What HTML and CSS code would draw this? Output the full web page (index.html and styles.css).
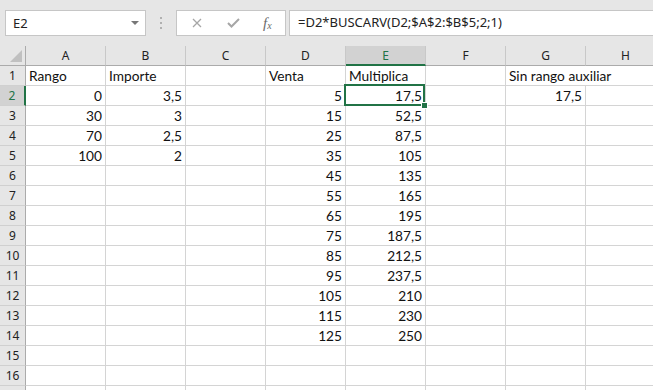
FILE: index.html
```html
<!DOCTYPE html>
<html lang="es">
<head>
  <meta charset="UTF-8" />
  <title>Hoja de cálculo - BUSCARV</title>
  <link rel="stylesheet" href="styles.css">
</head>
<body>
  <div class="toolbar">
    <div class="name-box">
      <span>E2</span>
      <span class="arrow"></span>
    </div>
    <div class="grip"><i></i><i></i><i></i></div>
    <div class="fx-buttons">
      <svg class="btn-x" width="10" height="10" viewBox="0 0 10 10"><path d="M1 1L9 9M9 1L1 9" stroke="#a6a6a6" stroke-width="1.3" fill="none"/></svg>
      <svg class="btn-ok" width="13" height="10" viewBox="0 0 13 10"><path d="M1 5L4.5 8.5L12 1" stroke="#a6a6a6" stroke-width="2" fill="none"/></svg>
      <span class="btn-fx">f<sub>x</sub></span>
    </div>
    <div class="formula">=D2*BUSCARV(D2;$A$2:$B$5;2;1)</div>
  </div>

  <div class="sheet" id="sheet">
    <div class="selection"><span class="handle"></span></div>
  </div>

  <script>
    const cols = ["A", "B", "C", "D", "E", "F", "G", "H"];
    // row -> { col: value }, strings starting with "#" are text cells
    const data = {
      1: { A: "#Rango", B: "#Importe", D: "#Venta", E: "#Multiplica", G: "#Sin rango auxiliar" },
      2: { A: "0", B: "3,5", D: "5", E: "17,5", G: "17,5" },
      3: { A: "30", B: "3", D: "15", E: "52,5" },
      4: { A: "70", B: "2,5", D: "25", E: "87,5" },
      5: { A: "100", B: "2", D: "35", E: "105" },
      6: { D: "45", E: "135" },
      7: { D: "55", E: "165" },
      8: { D: "65", E: "195" },
      9: { D: "75", E: "187,5" },
      10: { D: "85", E: "212,5" },
      11: { D: "95", E: "237,5" },
      12: { D: "105", E: "210" },
      13: { D: "115", E: "230" },
      14: { D: "125", E: "250" }
    };

    const sheet = document.getElementById("sheet");

    function cell(cls, text) {
      const d = document.createElement("div");
      d.className = cls;
      if (text) d.textContent = text;
      sheet.appendChild(d);
      return d;
    }

    // Column headers
    cell("corner");
    cols.forEach(c => cell(c === "E" ? "col-head active" : "col-head", c));

    // Rows (the 17th only peeks in at the bottom edge)
    for (let r = 1; r <= 17; r++) {
      const label = r < 17 ? String(r) : "";
      cell(r === 2 ? "row-head active" : "row-head", label);
      const row = data[r] || {};
      for (let i = 0; i < cols.length; i++) {
        const c = cols[i];
        const v = row[c];
        if (v && v[0] === "#") {
          const el = cell("cell text", v.slice(1));
          if (c === "G") { el.classList.add("span2"); i++; }
        } else {
          cell("cell num", v || "");
        }
      }
    }
  </script>
</body>
</html>
```

FILE: styles.css
```css
html, body {
  margin: 0;
  padding: 0;
  overflow: hidden;
}
body {
  width: 653px;
  height: 390px;
  background: #fff;
  font-family: Lato, "Liberation Sans", sans-serif;
}

.toolbar {
  height: 46px;
  background: #e6e6e6;
  display: flex;
  align-items: flex-start;
  padding-top: 10px;
  box-sizing: border-box;
}
.name-box {
  margin-left: 5px;
  width: 141px;
  height: 26px;
  box-sizing: border-box;
  background: #fff;
  border: 1px solid #c6c6c6;
  display: flex;
  align-items: center;
  justify-content: space-between;
  padding: 0 6px 0 7px;
  font-family: "Noto Sans", sans-serif;
  font-size: 13px;
  color: #222;
}
.arrow {
  width: 0;
  height: 0;
  border-left: 4px solid transparent;
  border-right: 4px solid transparent;
  border-top: 4px solid #777;
}
.grip {
  width: 30px;
  display: flex;
  flex-direction: column;
  align-items: center;
  gap: 3px;
  padding-top: 7px;
}
.grip i {
  display: block;
  width: 2px;
  height: 2px;
  background: #b0b0b0;
}
.fx-buttons {
  width: 110px;
  height: 26px;
  box-sizing: border-box;
  background: #fff;
  border: 1px solid #c6c6c6;
  display: flex;
  align-items: center;
  padding-left: 15px;
}
.btn-x { margin-right: 25px; }
.btn-ok { margin-right: 23px; }
.btn-fx {
  font-family: "Liberation Serif", serif;
  font-style: italic;
  font-size: 15px;
  color: #6b6b6b;
  line-height: 1;
}
.btn-fx sub {
  font-size: 10px;
  vertical-align: baseline;
  position: relative;
  top: 1px;
}
.formula {
  margin-left: 3px;
  flex: 1;
  height: 26px;
  box-sizing: border-box;
  background: #fff;
  border: 1px solid #c6c6c6;
  border-right: none;
  padding-left: 8px;
  font-family: "Noto Sans", sans-serif;
  font-size: 13px;
  line-height: 23px;
  color: #222;
  white-space: nowrap;
}

.sheet {
  position: relative;
  display: grid;
  grid-template-columns: 26px repeat(8, 80px);
  grid-auto-rows: 20px;
  background: #fff;
}
.sheet > div {
  box-sizing: border-box;
}
.corner {
  background: #e6e6e6;
  border-right: 1px solid #ababab;
  border-bottom: 1px solid #ababab;
  position: relative;
}
.corner::after {
  content: "";
  position: absolute;
  right: 3px;
  bottom: 3px;
  border-left: 12px solid transparent;
  border-bottom: 12px solid #c0c0c0;
}
.col-head {
  background: #e6e6e6;
  border-right: 1px solid #c8c8c8;
  border-bottom: 1px solid #ababab;
  text-align: center;
  font-family: "Noto Sans", sans-serif;
  font-size: 12px;
  line-height: 20px;
  color: #222;
}
.col-head.active {
  background: #d2d2d2;
  color: #217346;
  border-bottom: 2px solid #217346;
}
.row-head {
  background: #e6e6e6;
  border-right: 1px solid #ababab;
  border-bottom: 1px solid #d0d0d0;
  text-align: center;
  font-family: "Noto Sans", sans-serif;
  font-size: 12px;
  line-height: 19px;
  color: #222;
}
.row-head.active {
  background: #d2d2d2;
  color: #217346;
  border-right: 2px solid #217346;
}
.cell {
  border-right: 1px solid #d4d4d4;
  border-bottom: 1px solid #d4d4d4;
  font-size: 13.7px;
  line-height: 20px;
  color: #111;
  white-space: nowrap;
  padding: 0 3px;
}
.cell.num { text-align: right; }
.cell.text { text-align: left; }
.cell.span2 { grid-column: span 2; }

.selection {
  position: absolute;
  left: 344px;
  top: 38px;
  width: 81px;
  height: 22px;
  border: 2px solid #217346;
  box-sizing: border-box;
  pointer-events: none;
}
.handle {
  position: absolute;
  right: -5px;
  bottom: -5px;
  width: 5px;
  height: 5px;
  background: #217346;
  border: 1px solid #fff;
}
```
